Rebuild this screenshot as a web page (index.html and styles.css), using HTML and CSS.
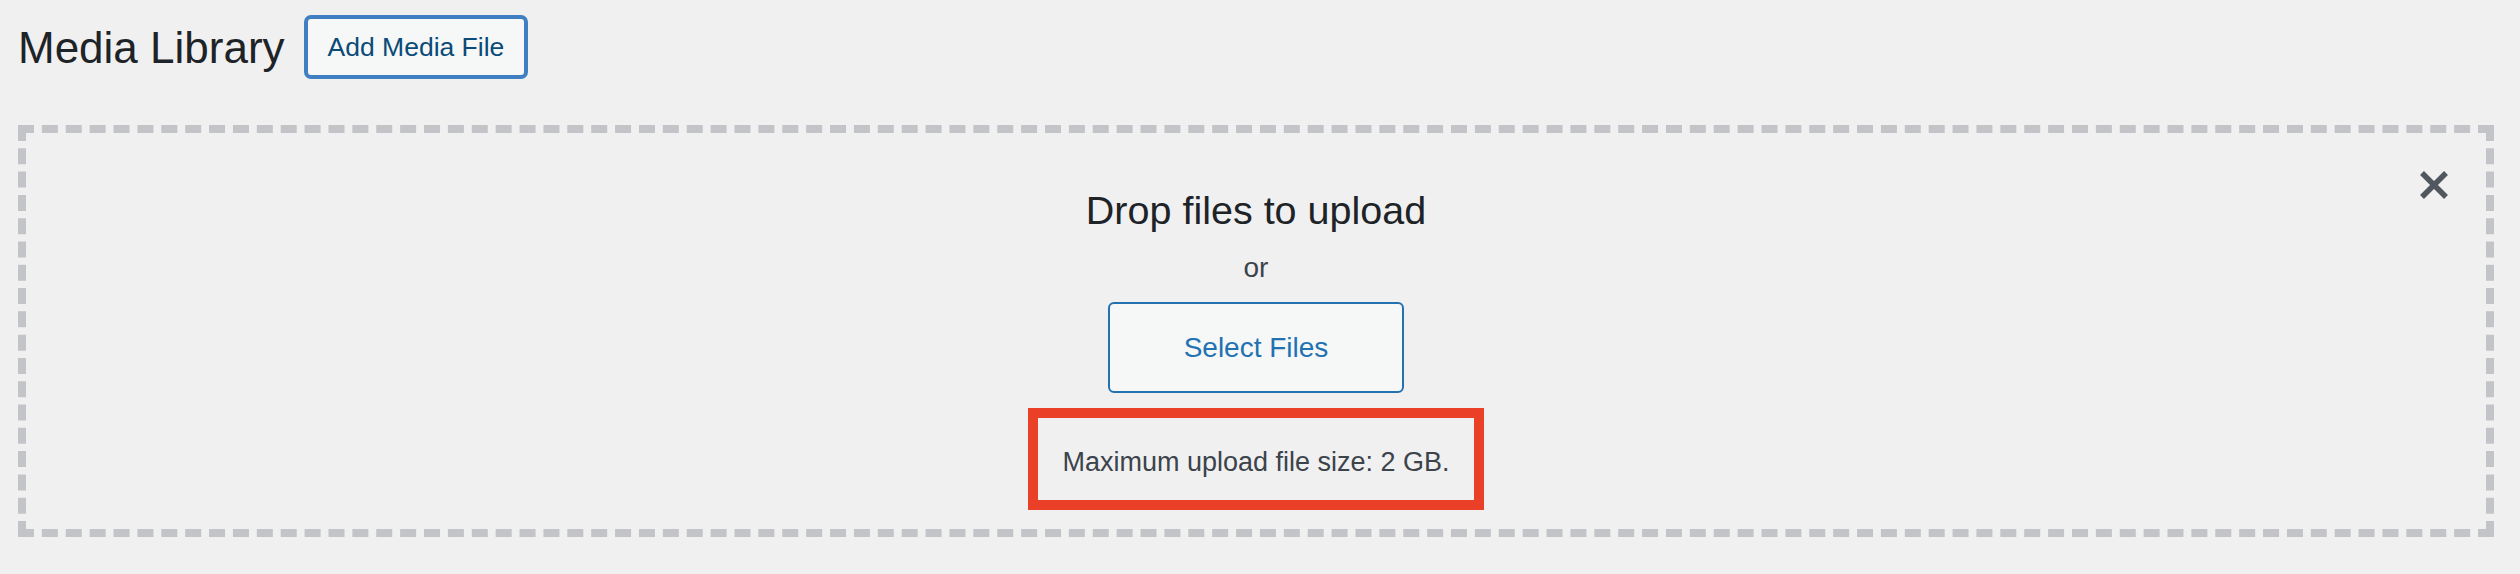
FILE: index.html
```html
<!DOCTYPE html>
<html>
<head>
    <title>Media Library</title>
    <link rel="stylesheet" href="styles.css">
</head>
<body>

<div class="wrap">
    <div class="page-head">
        <h1 class="page-title">Media Library</h1>
        <a href="#" class="title-action">Add Media File</a>
    </div>

    <!-- drop zone -->
    <div class="uploader">
        <button class="close-btn" aria-label="Close uploader">
            <svg width="30" height="30" viewBox="0 0 30 30">
                <path d="M3 3 L27 27 M27 3 L3 27" stroke="#50575e" stroke-width="5.5" fill="none"/>
            </svg>
        </button>
        <div class="upload-ui">
            <h2 class="drop-title">Drop files to upload</h2>
            <p class="drop-or">or</p>
            <button class="browse-btn">Select Files</button>
            <div class="max-size">
                <p>Maximum upload file size: 2 GB.</p>
            </div>
        </div>
    </div>
</div>

</body>
</html>
```

FILE: styles.css
```css
body {
    margin: 0;
    background-color: #f0f0f1;
    font-family: "Liberation Sans", Arial, sans-serif;
    color: #1d2327;
}

.wrap {
    padding: 15px 26px 0 18px;
}

.page-head {
    display: flex;
    align-items: center;
    height: 64px;
}

.page-title {
    margin: 0 19px 0 0;
    font-size: 44px;
    font-weight: 400;
    line-height: 57px;
    color: #1d2327;
}

.title-action {
    display: inline-block;
    height: 56px;
    line-height: 56px;
    padding: 0 20px;
    border: 4px solid #3f7fc2;
    border-radius: 7px;
    background-color: #f6f7f7;
    color: #0a4b78;
    font-size: 26.5px;
    text-decoration: none;
}

.uploader {
    position: relative;
    margin-top: 46px;
    border: 8px dashed #c3c4c7;
}

.close-btn {
    position: absolute;
    top: 37px;
    right: 37px;
    width: 30px;
    height: 30px;
    padding: 0;
    border: none;
    background: none;
    cursor: pointer;
}

.close-btn svg {
    display: block;
}

.upload-ui {
    display: flex;
    flex-direction: column;
    align-items: center;
    padding: 54px 0 19px;
}

.drop-title {
    margin: 0;
    font-size: 39.5px;
    font-weight: 400;
    line-height: 47px;
    color: #1d2327;
}

.drop-or {
    margin: 14px 0 0;
    font-size: 28px;
    line-height: 40px;
    color: #3c434a;
}

.browse-btn {
    margin-top: 14px;
    height: 91px;
    padding: 0 74px;
    border: 2px solid #2271b1;
    border-radius: 6px;
    background-color: #f6f7f7;
    color: #2271b1;
    font-family: inherit;
    font-size: 28px;
    line-height: 87px;
    cursor: pointer;
}

.max-size {
    margin-top: 15px;
    height: 82px;
    padding: 0 24px;
    border: 10px solid #e94027;
}

.max-size p {
    margin: 0;
    padding-top: 6px;
    font-size: 27px;
    line-height: 76px;
    color: #3c434a;
}
```
